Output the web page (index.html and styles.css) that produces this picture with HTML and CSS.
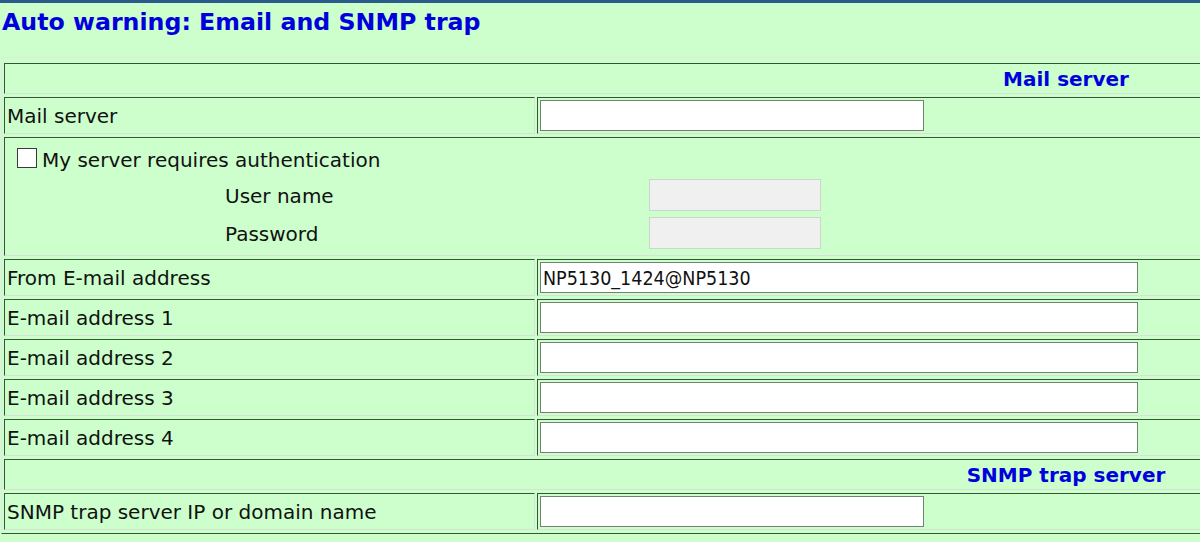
FILE: index.html
```html
<!DOCTYPE html>
<html>
<head>
<meta charset="utf-8">
<title>Auto warning</title>
<link rel="stylesheet" href="styles.css">
</head>
<body>
<div class="topbar"></div>
<h1 class="title">Auto warning: Email and SNMP trap</h1>
<table class="grid">
  <colgroup><col class="c1"><col class="c2"></colgroup>
  <tr><th colspan="2" class="section">Mail server</th></tr>
  <tr><td class="label">Mail server</td><td class="field"><input class="txt short" type="text"></td></tr>
  <tr>
    <td colspan="2" class="auth">
      <div class="auth-check"><input type="checkbox" class="chk"><span class="chk-text">My server requires authentication</span></div>
      <div class="cred">
        <span class="cred-label">User name</span><input class="txt cred-input" type="text" disabled>
        <span class="cred-label">Password</span><input class="txt cred-input" type="password" disabled>
      </div>
    </td>
  </tr>
  <tr><td class="label">From E-mail address</td><td class="field"><input class="txt long" type="text" value="NP5130_1424@NP5130"></td></tr>
  <tr><td class="label">E-mail address 1</td><td class="field"><input class="txt long" type="text"></td></tr>
  <tr><td class="label">E-mail address 2</td><td class="field"><input class="txt long" type="text"></td></tr>
  <tr><td class="label">E-mail address 3</td><td class="field"><input class="txt long" type="text"></td></tr>
  <tr><td class="label">E-mail address 4</td><td class="field"><input class="txt long" type="text"></td></tr>
  <tr><th colspan="2" class="section">SNMP trap server</th></tr>
  <tr><td class="label">SNMP trap server IP or domain name</td><td class="field"><input class="txt short" type="text"></td></tr>
</table>
</body>
</html>
```
FILE: styles.css
```css
html {
  overflow: hidden;
  background: #ccffcc;
}
body {
  margin: 0;
  background: #ccffcc;
  font-family: "DejaVu Sans", Verdana, sans-serif;
  font-size: 20px;
  color: #111;
}
.topbar {
  height: 3px;
  background: #2b5b8b;
}
.title {
  margin: 5px 0 0 2px;
  font-size: 23.7px;
  line-height: 28px;
  font-weight: bold;
  color: #0000dd;
}
.grid {
  margin: 21px 0 0 1px;
  width: 2130px;
  table-layout: fixed;
  border-collapse: separate;
  border-spacing: 2px 3px;
  border: 1px solid;
  border-color: #dfe8df #355535 #355535 #dfe8df;
  padding-top: 2px;
}
.c1 { width: 531px; }
.grid td, .grid th {
  border: 1px solid;
  border-color: #355535 #d6e2d6 #d6e2d6 #355535;
  padding: 2px 1px;
  line-height: 23px;
  vertical-align: middle;
}
.grid th.section {
  padding: 4px 1px 2px;
  font-weight: bold;
  color: #0000dd;
  text-align: center;
}
.grid td.label {
  text-align: left;
  padding: 4px 1px 2px 2px;
}
.grid td.field {
  padding: 2px 2px;
}
.txt {
  box-sizing: border-box;
  display: block;
  margin: 0;
  height: 31px;
  border: 1px solid #718271;
  background: #fff;
  padding: 2px 2px 0;
  font-family: "DejaVu Sans Condensed", "DejaVu Sans", sans-serif;
  font-size: 19.5px;
  color: #111;
  outline: none;
}
.short { width: 384px; }
.long { width: 598px; }
.grid td.auth {
  padding: 10px 0 6px 12px;
}
.auth-check {
  display: flex;
  align-items: center;
  gap: 5px;
  height: 20px;
}
.chk-text {
  margin-top: 4px;
}
.chk {
  appearance: none;
  -webkit-appearance: none;
  margin: 0;
  width: 20px;
  height: 20px;
  border: 1px solid #3a3a3a;
  background: #fff;
  box-sizing: border-box;
}
.cred {
  display: grid;
  grid-template-columns: 424px 172px;
  row-gap: 6px;
  margin: 11px 0 0 208px;
  align-items: center;
}
.cred-label {
  padding-top: 2px;
}
.cred-input {
  width: 172px;
  height: 32px;
  background: #f0f0f0;
  border: 1px solid #ccd6cc;
}
```
